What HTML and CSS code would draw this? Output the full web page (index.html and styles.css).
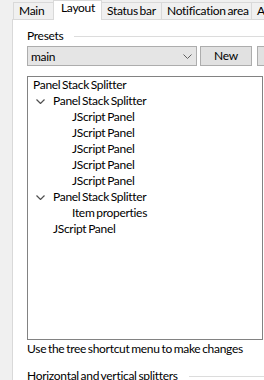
FILE: index.html
```html
<!DOCTYPE html>
<html>
<head>
<meta charset="utf-8">
<link rel="stylesheet" href="styles.css">
</head>
<body>
<div class="window">
  <div class="tabs">
    <div class="tab t-main">Main</div>
    <div class="tab active t-layout">Layout</div>
    <div class="tab t-status">Status bar</div>
    <div class="tab t-notif">Notification area</div>
    <div class="tab t-adv">Advanced</div>
  </div>
  <div class="panel">
    <div class="group-title"><span>Presets</span><span class="rule"></span></div>
    <div class="preset-row">
      <div class="combo"><span>main</span>
        <svg class="combo-arrow" width="9" height="5" viewBox="0 0 9 5"><polyline points="0.5,0.5 4.5,4.5 8.5,0.5" fill="none" stroke="#606060" stroke-width="1"/></svg>
      </div>
      <div class="btn">New</div>
      <div class="btn btn-next">Save</div>
    </div>
    <div class="tree">
      <div class="row l0">Panel Stack Splitter</div>
      <div class="row l1"><span class="toggle"><svg width="9" height="5" viewBox="0 0 9 5"><polyline points="0.5,0.5 4.5,4.5 8.5,0.5" fill="none" stroke="#505050" stroke-width="1.2"/></svg></span>Panel Stack Splitter</div>
      <div class="row l2">JScript Panel</div>
      <div class="row l2">JScript Panel</div>
      <div class="row l2">JScript Panel</div>
      <div class="row l2">JScript Panel</div>
      <div class="row l2">JScript Panel</div>
      <div class="row l1"><span class="toggle"><svg width="9" height="5" viewBox="0 0 9 5"><polyline points="0.5,0.5 4.5,4.5 8.5,0.5" fill="none" stroke="#505050" stroke-width="1.2"/></svg></span>Panel Stack Splitter</div>
      <div class="row l2">Item properties</div>
      <div class="row l1leaf">JScript Panel</div>
    </div>
    <div class="hint">Use the tree shortcut menu to make changes</div>
    <div class="group-title second"><span>Horizontal and vertical splitters</span><span class="rule"></span></div>
  </div>
</div>
</body>
</html>
```

FILE: styles.css
```css
html, body {
  margin: 0;
  padding: 0;
}
body {
  background: #f0f0f0;
  font-family: Lato, "Noto Sans", sans-serif;
  font-size: 12px;
  letter-spacing: -0.3px;
  word-spacing: -1px;
  color: #000;
  width: 264px;
  height: 380px;
  overflow: hidden;
}
.window {
  padding-left: 12px;
}
.tabs {
  display: flex;
  align-items: flex-end;
  height: 19px;
  padding-left: 2px;
}
.tab {
  box-sizing: border-box;
  height: 17px;
  line-height: 15px;
  padding: 0 0 0 5px;
  border: 1px solid #d9d9d9;
  border-bottom: none;
  background: #f0f0f0;
  margin-left: -1px;
  white-space: nowrap;
  flex-shrink: 0;
  overflow: hidden;
}
.t-main { width: 41px; }
.t-layout { width: 49px; }
.t-status { width: 61px; }
.t-notif { width: 91px; }
.t-adv { width: 60px; }
.tab.active {
  height: 20px;
  line-height: 14px;
  background: #fff;
  padding-left: 7px;
  margin-bottom: -1px;
  position: relative;
  z-index: 1;
}
.panel {
  background: #fff;
  border-top: 1px solid #d9d9d9;
  border-left: 1px solid #d9d9d9;
  padding: 8px 0 0 14px;
  height: 400px;
  overflow: hidden;
}
.group-title {
  display: flex;
  align-items: center;
  height: 15px;
  line-height: 15px;
  white-space: nowrap;
}
.group-title .rule {
  flex: 1;
  border-top: 1px solid #dcdcdc;
  margin-left: 11px;
  margin-top: 2px;
}
.preset-row {
  display: flex;
  margin-top: 3px;
  width: 300px;
}
.combo {
  box-sizing: border-box;
  width: 170px;
  height: 20px;
  background: #e5e5e5;
  border: 1px solid #adadad;
  display: flex;
  align-items: center;
  justify-content: space-between;
  padding: 0 4px 0 3px;
  flex-shrink: 0;
}
.combo-arrow {
  display: block;
}
.btn {
  box-sizing: border-box;
  width: 52px;
  height: 20px;
  background: #e1e1e1;
  border: 1px solid #adadad;
  text-align: center;
  line-height: 18px;
  margin-left: 3px;
  flex-shrink: 0;
}
.btn-next {
  margin-left: 5px;
  color: #e1e1e1;
}
.tree {
  box-sizing: border-box;
  margin-top: 10px;
  width: 236px;
  height: 264px;
  border: 1px solid #828282;
  background: #fff;
}
.row {
  height: 16px;
  line-height: 16px;
  display: flex;
  align-items: center;
  white-space: nowrap;
}
.l0 { padding-left: 5px; }
.l1 { padding-left: 5px; }
.l1leaf { padding-left: 25px; }
.l2 { padding-left: 44px; }
.toggle {
  width: 20px;
  height: 16px;
  display: flex;
  align-items: center;
  padding-left: 3px;
  box-sizing: border-box;
}
.toggle svg { display: block; }
.hint {
  margin-top: 1px;
  line-height: 15px;
  white-space: nowrap;
}
.group-title.second {
  margin-top: 12px;
}
```
